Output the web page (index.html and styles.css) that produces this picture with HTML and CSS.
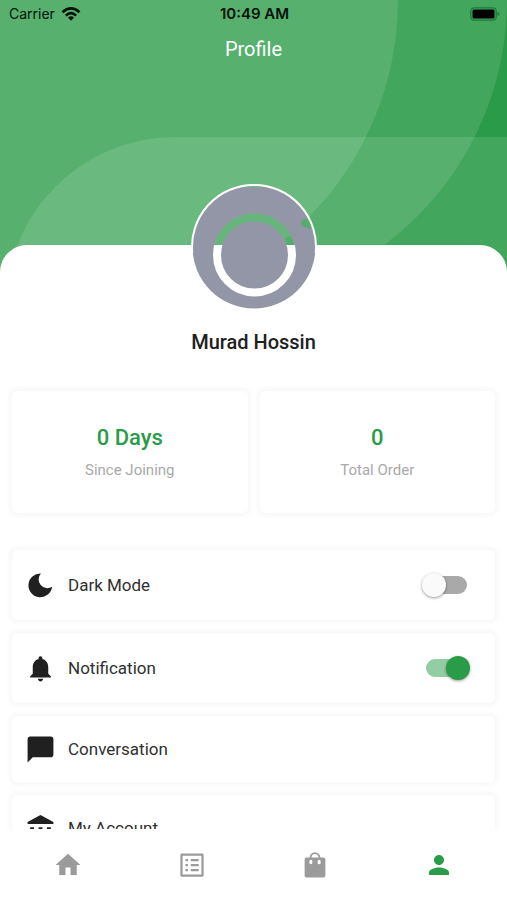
FILE: index.html
```html
<!DOCTYPE html>
<html lang="en">
<head>
<meta charset="utf-8">
<meta name="viewport" content="width=device-width, initial-scale=1">
<title>Profile</title>
<link rel="stylesheet" href="styles.css">
</head>
<body>
<div class="app">
  <div class="screen">
    <svg class="backdrop" viewBox="0 0 507 275" preserveAspectRatio="xMidYMin slice" aria-hidden="true">
      <rect width="507" height="275" fill="#2a9b48"/>
      <g fill="#fff" fill-opacity=".115">
        <path d="M0 0H507A306 306 0 0 1 201 306H0Z"/>
        <path d="M0 0H398A309 309 0 0 1 89 309H0Z"/>
        <path d="M6 306A169 169 0 0 1 175 137H507V306Z"/>
      </g>
    </svg>
    <header class="top">
      <div class="status">
        <span class="carrier">Carrier
          <svg width="20" height="14" viewBox="0 0 20 14" aria-hidden="true"><g fill="none" stroke="#041208" stroke-width="2.6"><path d="M1.5 5.2Q10-2.4 18.500 5.200"/><path d="M4.800 8.600Q10 3.800 15.200 8.600"/></g><path d="M6.900 10.500Q10 7.900 13.100 10.500L10 13.800Z" fill="#041208"/></svg>
        </span>
        <span class="time">10:49 AM</span>
        <span class="battery">
          <svg width="30" height="14" viewBox="0 0 30 14" aria-hidden="true"><rect x=".8" y=".8" width="25.400" height="12.400" rx="3.500" fill="none" stroke="#1f7a3a" stroke-width="1.300"/><rect x="2.500" y="2.500" width="22" height="9" rx="1.500"/><path d="M27.500 5v4q2-.6 2-2t-2-2z" fill="#1f7a3a"/></svg>
        </span>
      </div>
      <h1>Profile</h1>
    </header>
    <main class="sheet">
      <svg class="avatar" viewBox="0 0 126 126" role="img" aria-label="Profile photo">
        <defs>
          <clipPath id="upper"><rect width="126" height="61"/></clipPath>
        </defs>
        <circle cx="63" cy="63" r="61.500" fill="#9396a6"/>
        <circle cx="63.500" cy="71" r="37.500" fill="none" stroke="#fff" stroke-width="8"/>
        <g clip-path="url(#upper)">
          <circle cx="63.500" cy="71" r="37.500" fill="none" stroke="#9396a6" stroke-width="9"/>
          <circle cx="63.500" cy="71" r="37.500" fill="none" stroke="#68b47d" stroke-width="8"/>
          <path d="M94 54q4-3 7 0l2 7h-7z" fill="#55ac6d"/>
        </g>
        <path d="M110 39q2-5 8-4l4 9q-11 1-12-5z" fill="#55ac6d"/>
        <path d="M48 3.500Q63 .5 78 3.500Z" fill="#68b47d"/>
        <path d="M1.300 69A62 62 0 1 1 124.700 69" fill="none" stroke="#fff" stroke-width="2"/>
      </svg>
      <h2>Murad Hossin</h2>
      <section class="stats">
        <div class="card stat"><strong>0 Days</strong><span>Since Joining</span></div>
        <div class="card stat"><strong>0</strong><span>Total Order</span></div>
      </section>
      <section class="settings">
        <label class="card row toggle">
          <svg viewBox="0 0 24 24" aria-hidden="true"><path d="M12.300 2.700A6.800 6.800 0 0 0 21 13A9.200 9.200 0 1 1 12.300 2.700z"/></svg>
          <span>Dark Mode</span>
          <input type="checkbox" role="switch">
        </label>
        <label class="card row toggle">
          <svg viewBox="0 0 24 24" aria-hidden="true"><path d="M12 22c1.100 0 2-.9 2-2h-4c0 1.100.89 2 2 2zm6-6v-5c0-3.070-1.640-5.640-4.500-6.320V4c0-.83-.67-1.500-1.500-1.500s-1.500.67-1.500 1.500v.68C7.630 5.360 6 7.920 6 11v5l-2 2v1h16v-1l-2-2z"/></svg>
          <span>Notification</span>
          <input type="checkbox" role="switch" checked>
        </label>
        <a class="card row" href="#conversation">
          <svg viewBox="0 0 24 24" aria-hidden="true"><path d="M20 2H4c-1.100 0-2 .9-2 2v18l4-4h14c1.100 0 2-.9 2-2V4c0-1.100-.9-2-2-2z"/></svg>
          <span>Conversation</span>
        </a>
        <a class="card row" href="#account">
          <svg viewBox="0 0 24 24" aria-hidden="true"><path d="M2 8.500V7l10-5.500L22 7v1.500zM4 11h3v7H4zm6.500 0h3v7h-3zm6.500 0h3v7h-3zM2 19.500h20v3H2z"/></svg>
          <span>My Account</span>
        </a>
      </section>
    </main>
  </div>
  <nav class="tabs">
    <a href="#home" aria-label="Home"><svg viewBox="0 0 24 24"><path d="M10 20v-6h4v6h5v-8h3L12 3 2 12h3v8z"/></svg></a>
    <a href="#orders" aria-label="Orders"><svg viewBox="0 0 24 24"><path d="M19.500 4.500v15h-15v-15h15m.6-1.800H3.900c-.7 0-1.200.5-1.200 1.200v16.200c0 .7.500 1.200 1.200 1.200h16.200c.7 0 1.200-.5 1.200-1.200V3.900c0-.7-.5-1.200-1.200-1.200zM11 7.200h6.300v1.800H11zm0 4h6.300v1.800H11zm0 4h6.300v1.800H11zM6.800 7.200h2v1.800h-2zm0 4h2v1.800h-2zm0 4h2v1.800h-2z"/></svg></a>
    <a href="#bag" aria-label="Bag"><svg viewBox="0 0 24 24"><path fill-rule="evenodd" d="M18.500 6H16.300a4.300 4.300 0 0 0-8.600 0H5.500C4.400 6 3.700 6.700 3.700 7.700v12.600c0 1 .7 1.700 1.800 1.700h13c1.100 0 1.800-.7 1.800-1.700V7.700c0-1-.7-1.700-1.800-1.700zM12 3.200A2.800 2.800 0 0 1 14.800 6H9.200A2.800 2.800 0 0 1 12 3.200zM7.500 9a1.200 1.200 0 0 1 2.400 0v1.200a1.200 1.200 0 0 1-2.400 0zm6.600 0a1.200 1.200 0 0 1 2.400 0v1.200a1.200 1.200 0 0 1-2.400 0z"/></svg></a>
    <a class="active" href="#profile" aria-label="Profile" aria-current="page"><svg viewBox="0 0 24 24"><path d="M12 12c2.210 0 4-1.790 4-4s-1.790-4-4-4-4 1.790-4 4 1.790 4 4 4zm0 2c-2.670 0-8 1.340-8 4v2h16v-2c0-2.660-5.330-4-8-4z"/></svg></a>
  </nav>
</div>
</body>
</html>
```
FILE: styles.css
```css
* {
  box-sizing: border-box;
}

body {
  margin: 0;
  background: #fff;
  color: #202020;
  font-family: Roboto, "Liberation Sans", sans-serif;
}

h1,
h2 {
  margin: 0;
}

.app {
  display: flex;
  flex-direction: column;
  height: 100vh;
}

.screen {
  position: relative;
  flex: 1;
  min-height: 0;
  overflow: hidden;
}

.backdrop {
  position: absolute;
  top: 0;
  left: 0;
  width: 100%;
  height: 275px;
}

.top {
  position: relative;
  height: 245px;
}

.status {
  display: grid;
  grid-template-columns: 1fr auto 1fr;
  align-items: center;
  height: 27px;
  padding: 0 7px 0 9px;
  color: #041208;
  font: 14px Inter, sans-serif;
}

.carrier {
  display: flex;
  align-items: center;
  gap: 6px;
}

.time {
  font-size: 15px;
  font-weight: 600;
}

.battery {
  display: flex;
  justify-content: flex-end;
}

.top h1 {
  padding-top: 9px;
  color: #fff;
  font-size: 20px;
  font-weight: 400;
  line-height: 26px;
  text-align: center;
}

.sheet {
  position: relative;
  display: flex;
  flex-direction: column;
  align-items: center;
  padding: 0 12px;
  border-radius: 27px 27px 0 0;
  background: #fff;
}

.avatar {
  width: 126px;
  height: 126px;
  margin-top: -61px;
}

.sheet h2 {
  margin-top: 19px;
  font-size: 20px;
  font-weight: 500;
  line-height: 26px;
}

.stats {
  display: grid;
  grid-template-columns: 1fr 1fr;
  gap: 12px;
  width: 100%;
  margin-top: 36px;
}

.card {
  border-radius: 5px;
  background: #fff;
  box-shadow: 0 0 4px 3px #f8f8f8;
}

.stat {
  display: flex;
  flex-direction: column;
  align-items: center;
  gap: 8px;
  padding: 33px 0;
}

.stat strong {
  color: #2a9b48;
  font-size: 22px;
  font-weight: 500;
  line-height: 28px;
}

.stat span {
  color: #a9a9a9;
  font-size: 15px;
  line-height: 20px;
}

.settings {
  display: flex;
  flex-direction: column;
  gap: 13px;
  width: 100%;
  margin-top: 37px;
}

.row {
  display: flex;
  align-items: center;
  gap: 12px;
  height: 66px;
  padding: 0 28px 0 13px;
  color: #303030;
  font-size: 17px;
  text-decoration: none;
}

.toggle {
  height: 70px;
}

.row svg {
  width: 31px;
  height: 31px;
  fill: #202020;
}

.row span {
  flex: 1;
}

.row input {
  position: relative;
  width: 44px;
  height: 24px;
  margin: 0;
  appearance: none;
}

.row input::before {
  content: "";
  position: absolute;
  inset: 3px 0 3px 3px;
  border-radius: 9px;
  background: #a9a9a9;
}

.row input::after {
  content: "";
  position: absolute;
  top: 0;
  left: -1px;
  width: 24px;
  height: 24px;
  border-radius: 50%;
  background: #fafafa;
  box-shadow: 0 1px 3px #0006;
}

.row input:checked::before {
  right: 4px;
  background: #94cda3;
}

.row input:checked::after {
  left: 23px;
  background: #2a9b48;
}

.tabs {
  display: flex;
  align-items: center;
  height: 71px;
  padding: 0 6px;
  background: #fff;
}

.tabs a {
  display: flex;
  flex: 1;
  justify-content: center;
}

.tabs svg {
  width: 30px;
  height: 30px;
  fill: #9b9b9b;
}

.tabs .active svg {
  fill: #2a9b48;
}
```
